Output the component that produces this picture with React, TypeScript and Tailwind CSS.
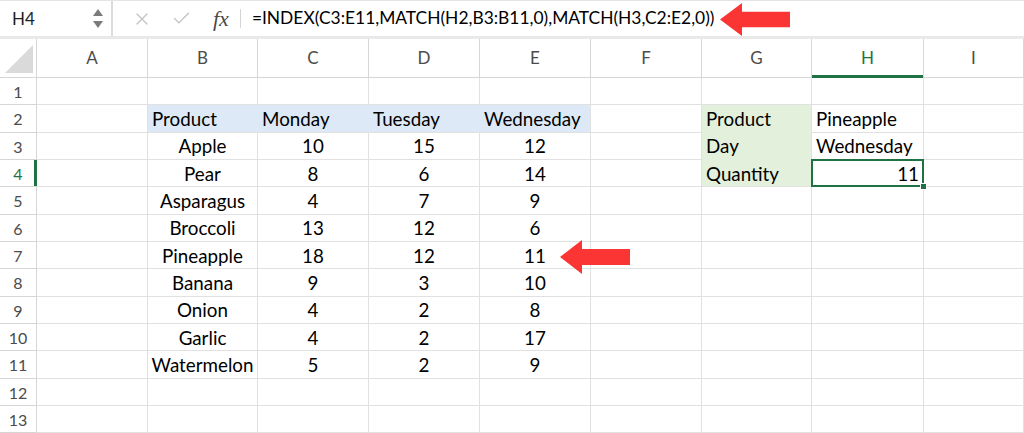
import * as React from 'react';
import { X, Check } from 'lucide-react';

const COLS = ['A', 'B', 'C', 'D', 'E', 'F', 'G', 'H', 'I'];

const TABLE: Record<number, string[]> = {
    3: ['Apple', '10', '15', '12'],
    4: ['Pear', '8', '6', '14'],
    5: ['Asparagus', '4', '7', '9'],
    6: ['Broccoli', '13', '12', '6'],
    7: ['Pineapple', '18', '12', '11'],
    8: ['Banana', '9', '3', '10'],
    9: ['Onion', '4', '2', '8'],
    10: ['Garlic', '4', '2', '17'],
    11: ['Watermelon', '5', '2', '9'],
};

const HEADERS = ['Product', 'Monday', 'Tuesday', 'Wednesday'];
const LOOKUP: Record<number, [string, string]> = {
    2: ['Product', 'Pineapple'],
    3: ['Day', 'Wednesday'],
    4: ['Quantity', '11'],
};

function Arrow({ className }: { className: string }) {
    return (
        <svg className={className} viewBox="0 0 70 34" preserveAspectRatio="none">
            <polygon points="0,17 22,0 22,9 70,9 70,25 22,25 22,34" fill="#fb3434" />
        </svg>
    );
}

function Cell({ row, col }: { row: number; col: string }) {
    const base =
        'flex items-center border-r border-b border-[#e1e1e1] px-1 pt-[2px] text-[18.8px] leading-none text-black whitespace-nowrap';
    const idx = 'BCDE'.indexOf(col);

    if (row === 2 && idx >= 0) {
        return (
            <div className={`${base} bg-[#dde9f7] ${col === 'E' ? '' : 'border-r-[#dde9f7]'}`}>
                {HEADERS[idx]}
            </div>
        );
    }
    if (row >= 3 && row <= 11 && idx >= 0) {
        return <div className={`${base} justify-center`}>{TABLE[row][idx]}</div>;
    }
    if (col === 'G' && LOOKUP[row]) {
        return (
            <div className={`${base} bg-[#e3f1dc] ${row < 4 ? 'border-b-[#e3f1dc]' : ''}`}>
                {LOOKUP[row][0]}
            </div>
        );
    }
    if (col === 'H' && LOOKUP[row]) {
        if (row === 4) {
            return (
                <div className={`${base} relative justify-end`}>
                    {LOOKUP[row][1]}
                    <div className="absolute -left-px -top-px -right-px -bottom-px border-2 border-[#1f7244]" />
                    <div className="absolute -right-[4px] -bottom-[4px] w-[7px] h-[7px] bg-[#1f7244] border border-white" />
                </div>
            );
        }
        return <div className={base}>{LOOKUP[row][1]}</div>;
    }
    return <div className={base} />;
}

export default function App() {
    const rows = Array.from({ length: 13 }, (_, i) => i + 1);

    return (
        <div className="relative w-[1024px] h-[433px] overflow-hidden bg-white font-['Lato','Noto_Sans',sans-serif]">
            {/* formula bar */}
            <div className="flex h-[39px] border-t border-[#e4e4e4] border-b-[3px] border-b-[#e9e9e9]">
                <div className="flex w-[113px] items-center justify-between pl-3 pr-2 border-r-2 border-[#dcdcdc]">
                    <span className="text-[17px] text-[#222]">H4</span>
                    <div className="flex flex-col items-center gap-[5px]">
                        <svg width="10" height="7" viewBox="0 0 10 7"><polygon points="5,0 10,7 0,7" fill="#7b7b7b" /></svg>
                        <svg width="10" height="7" viewBox="0 0 10 7"><polygon points="0,0 10,0 5,7" fill="#7b7b7b" /></svg>
                    </div>
                </div>
                <div className="flex items-center pl-[19px]">
                    <X size={20} strokeWidth={1.6} className="text-[#c3c3c3]" />
                    <Check size={21} strokeWidth={1.6} className="ml-[19px] text-[#c3c3c3]" />
                    <span className="ml-[21px] font-['Liberation_Serif',serif] italic text-[22px] text-[#4a4a4a] leading-none">fx</span>
                    <div className="ml-[11px] h-[19px] w-px bg-[#d4d4d4]" />
                    <span className="ml-[11px] text-[17.4px] text-black whitespace-nowrap">
                        =INDEX(C3:E11,MATCH(H2,B3:B11,0),MATCH(H3,C2:E2,0))
                    </span>
                </div>
            </div>

            {/* sheet */}
            <div className="grid grid-cols-[37px_111px_110px_111px_111px_111px_111px_110px_112px_100px] grid-rows-[39px_repeat(13,27.33px)]">
                <div className="flex items-end justify-start border-r border-b border-[#d6d6d6] pl-[5px] pb-[4px]">
                    <svg width="28" height="28" viewBox="0 0 28 28"><polygon points="0,28 28,0 28,28" fill="#dadada" /></svg>
                </div>
                {COLS.map((c) => (
                    <div
                        key={c}
                        className={`relative flex items-center justify-center border-r border-b border-[#d6d6d6] text-[17px] ${c === 'H' ? 'text-[#1f7244]' : 'text-[#4b4b4b]'}`}
                    >
                        {c}
                        {c === 'H' && <div className="absolute left-0 right-0 -bottom-px h-[3px] bg-[#1f7244]" />}
                    </div>
                ))}

                {rows.map((r) => (
                    <React.Fragment key={r}>
                        <div
                            className={`relative flex items-center justify-center border-r border-b border-[#d6d6d6] pt-[2px] text-[16px] ${r === 4 ? 'text-[#1f7244]' : 'text-[#4b4b4b]'}`}
                        >
                            {r}
                            {r === 4 && <div className="absolute top-0 bottom-0 -right-px w-[3px] bg-[#1f7244]" />}
                        </div>
                        {COLS.map((c) => (
                            <Cell key={c} row={r} col={c} />
                        ))}
                    </React.Fragment>
                ))}
            </div>

            <Arrow className="absolute left-[720px] top-[3px] w-[70px] h-[33px]" />
            <Arrow className="absolute left-[560px] top-[240px] w-[70px] h-[34px]" />
        </div>
    );
}
